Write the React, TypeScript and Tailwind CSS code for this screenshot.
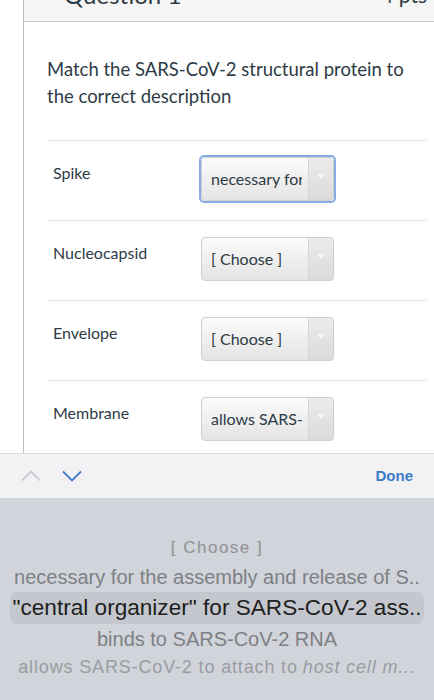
import React from "react";

const rows = [
    { label: "Spike", value: "necessary for", focused: true },
    { label: "Nucleocapsid", value: "[ Choose ]", focused: false },
    { label: "Envelope", value: "[ Choose ]", focused: false },
    { label: "Membrane", value: "allows SARS-", focused: false },
];

const SelectBox = ({ value, focused }: { value: string; focused: boolean }) => (
    <div
        className={
            focused
                ? "rounded-[5px] border-2 border-[#86ade4] -m-[2px]"
                : "rounded-[5px] border-2 border-transparent -m-[2px]"
        }
    >
        <div className="w-[133px] h-[44px] rounded-[4px] border border-[#cfcfcf] bg-gradient-to-b from-[#fbfbfb] to-[#e4e4e4] flex overflow-hidden">
            <div className="flex-1 ml-[9px] mr-[6px] flex items-center overflow-hidden whitespace-nowrap text-[16px] text-[#2d3b45]">
                {value}
            </div>
            <div className="w-[25px] border-l border-[#d6d6d6] bg-gradient-to-b from-[#ececec] to-[#dadada] flex justify-center pt-[16px]">
                <div className="w-0 h-0 border-l-[4px] border-r-[4px] border-t-[5px] border-l-transparent border-r-transparent border-t-[#f7f7f7]" />
            </div>
        </div>
    </div>
);

const App = () => {
    return (
        <div className="w-[434px] h-[700px] overflow-hidden flex flex-col bg-white font-['Lato',sans-serif]">
            {/* ===== PAGE ===== */}
            <div className="h-[454px] overflow-hidden border-b border-[#dcdcdc]">
                <div className="ml-[23px] border-l border-[#b8bec2] h-full">
                    {/* header */}
                    <div className="h-[22px] bg-[#f5f5f5] border-b border-[#c7cdd1] overflow-hidden">
                        <div className="-mt-[17px] flex items-center text-[#2d3b45] leading-[24px]">
                            <div className="w-[18px] h-[3px] bg-[#8a96a0] ml-[9px] mt-[6px]" />
                            <div className="ml-[13px] text-[24px]">Question 1</div>
                            <div className="ml-auto mr-[7px] text-[21px]">4 pts</div>
                        </div>
                    </div>

                    {/* body */}
                    <div className="pl-[23px] pr-[7px]">
                        <p className="pt-[34px] pb-[30px] text-[18.5px] leading-[27px] text-[#2d3b45]">
                            Match the SARS-CoV-2 structural protein to the correct description
                        </p>
                        {rows.map((row) => (
                            <div
                                key={row.label}
                                className="h-[80px] border-t border-[#e3e3e3] flex items-start pt-[16px]"
                            >
                                <div className="w-[154px] pl-[6px] pt-[4px] text-[16px] leading-[24px] text-[#2d3b45]">
                                    {row.label}
                                </div>
                                <SelectBox value={row.value} focused={row.focused} />
                            </div>
                        ))}
                    </div>
                </div>
            </div>

            {/* ===== TOOLBAR ===== */}
            <div className="h-[44px] bg-[#f2f2f4] flex items-center px-[21px] font-['Liberation_Sans',sans-serif]">
                <svg width="20" height="12" viewBox="0 0 20 12" fill="none">
                    <path d="M1 10.5 L10 1.5 L19 10.5" stroke="#c4c5c9" strokeWidth="1.6" />
                </svg>
                <svg width="20" height="12" viewBox="0 0 20 12" fill="none" className="ml-[21px]">
                    <path d="M1 1.5 L10 10.5 L19 1.5" stroke="#3f7bc8" strokeWidth="1.8" />
                </svg>
                <div className="ml-auto text-[15px] font-bold text-[#3d7bc9]">Done</div>
            </div>

            {/* ===== PICKER ===== */}
            <div className="flex-1 bg-[#d1d4da] flex flex-col items-center pt-[36px] font-['Liberation_Sans',sans-serif] whitespace-nowrap">
                <div className="h-[28px] flex items-center text-[17px] tracking-[1.5px] text-[#8f9196]">[ Choose ]</div>
                <div className="h-[30px] flex items-center text-[20px] text-[#7e8085]">
                    necessary for the assembly and release of S..
                </div>
                <div className="w-[414px] h-[32px] rounded-[8px] bg-[#c4c7cd] flex items-center justify-center text-[22.6px] text-[#1e1f21]">
                    "central organizer" for SARS-CoV-2 ass..
                </div>
                <div className="h-[30px] flex items-center text-[20px] text-[#7e8085]">
                    binds to SARS-CoV-2 RNA
                </div>
                <div className="h-[26px] flex items-center text-[18px] text-[#9a9ca1] tracking-[0.85px]">
                    allows SARS-CoV-2 to attach to <span className="italic ml-[5px]">host cell m...</span>
                </div>
            </div>
        </div>
    );
};

export default App;
